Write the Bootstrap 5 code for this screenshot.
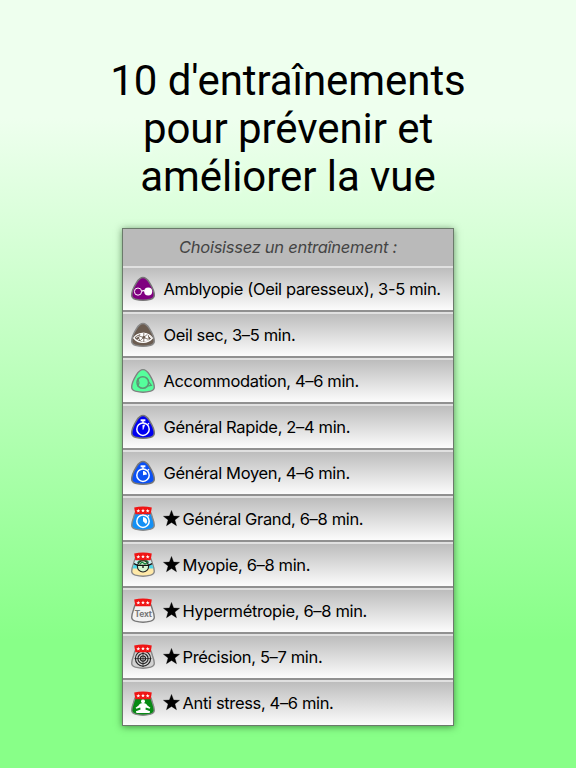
<!DOCTYPE html>
<html lang="fr">

<head>
    <meta charset="UTF-8" />
    <meta name="viewport" content="width=device-width, initial-scale=1" />
    <title>Entraînements pour la vue</title>
    <link href="https://cdn.jsdelivr.net/npm/bootstrap@5.3.2/dist/css/bootstrap.min.css" rel="stylesheet" />
    <style>
        body {
            min-height: 768px;
            background: linear-gradient(#eeffee 0, #eeffee 118px, #88ff88 640px, #88ff88 100%);
            font-family: Inter, "Liberation Sans", sans-serif;
            color: #000;
        }

        .page-title {
            padding-top: 57px;
            margin-bottom: 27px;
            font: 400 42px/48px Roboto, "Liberation Sans", sans-serif;
            letter-spacing: -.06px;
            text-shadow: 2px 2px 3px rgba(255, 255, 255, .3);
        }

        .training-panel {
            --bs-card-inner-border-radius: 0;
            width: 332px;
            border: 1px solid #6b7a6b;
            border-radius: 0;
            box-shadow: 0 1px 7px rgba(0, 40, 0, .5);
            background: #bababa;
        }

        .panel-title {
            height: 37px;
            font-size: 16.5px;
            letter-spacing: -.27px;
            color: #444;
        }

        .training-list .training {
            height: 46px;
            padding: 0 0 0 7px;
            border: 0;
            border-top: 2px solid #e0e0e0;
            border-bottom: 2px solid #909090;
            background: linear-gradient(#bdbdbd, #fcfcfc) padding-box;
            font-size: 16.5px;
            letter-spacing: -.35px;
            color: #000;
            white-space: nowrap;
        }

        .training-list .training:last-child {
            height: 45px;
            border-bottom-width: 0;
        }

        .training-icon {
            width: 26px;
            height: 26px;
            margin-right: 7.5px;
        }

        .star-icon {
            width: 17px;
            height: 17px;
            margin: 0 3px 2px -1px;
            stroke: #000;
            stroke-width: .04;
        }
    </style>
</head>

<body>
    <svg class="d-none">
        <defs>
            <path id="shape" d="M13 1.6C10.6 1.6 8.6 3.3 6.4 6.8C4 10.6 1.7 15.8 1.7 19.2C1.7 21.7 3.3 22.5 5.4 23.2C10.4 24.6 15.6 24.6 20.6 23.2C22.7 22.5 24.3 21.7 24.3 19.2C24.3 15.8 22 10.6 19.6 6.8C17.4 3.3 15.4 1.6 13 1.6Z" />
            <path id="pot" d="M5 7H21L22.6 12C23.7 15 24.3 17.3 24.3 19.2C24.3 21.7 22.7 22.5 20.6 23.2C15.6 24.6 10.4 24.6 5.4 23.2C3.3 22.5 1.7 21.7 1.7 19.2C1.7 17.3 2.3 15 3.4 12Z" />
            <path id="star" d="M0 -.95L.25 -.29L.95 -.26L.4 .17L.59 .85L0 .46L-.59 .85L-.4 .17L-.95 -.26L-.25 -.29Z" />
            <g id="crown">
                <path d="M4.2 1.6C10 .2 16 .2 21.8 1.6L20.6 8.2H5.4Z" fill="#f01414" />
                <g fill="#fff">
                    <use href="#star" transform="translate(8.3 4.8) scale(2.1)" />
                    <use href="#star" transform="translate(13 4.5) scale(2.1)" />
                    <use href="#star" transform="translate(17.7 4.8) scale(2.1)" />
                </g>
            </g>
            <g id="watch" fill="none" stroke="#fff">
                <circle cx="13" cy="15.2" r="6.2" stroke-width="1.5" />
                <path d="M10.6 6.3H15.4" stroke-width="2" />
                <path d="M13 6.5V9M18 9.2L19 10.2" stroke-width="1.4" />
            </g>
        </defs>
    </svg>

    <h1 class="page-title text-center">10 d'entraînements<br>pour prévenir et<br>améliorer la vue</h1>

    <div class="card training-panel mx-auto">
        <div class="panel-title d-flex align-items-center justify-content-center fst-italic">Choisissez un entraînement :</div>
        <div class="list-group list-group-flush training-list border-0 rounded-0">
            <div class="list-group-item training d-flex align-items-center">
                <svg class="training-icon" viewBox="0 0 26 26">
                    <use href="#shape" fill="#800080" stroke="#777" stroke-width="1.5" />
                    <circle cx="8" cy="15.6" r="3.6" fill="none" stroke="#fff" stroke-width="1" />
                    <path d="M11.6 15.2Q13.4 14 15 15" fill="none" stroke="#fff" stroke-width="1.2" />
                    <circle cx="18.2" cy="15.6" r="4" fill="#fff" />
                </svg>
                <span>Amblyopie (Oeil paresseux), 3-5 min.</span>
            </div>
            <div class="list-group-item training d-flex align-items-center">
                <svg class="training-icon" viewBox="0 0 26 26">
                    <use href="#shape" fill="#6b5c50" stroke="#888" stroke-width="1.5" />
                    <path d="M3.8 16C7 10.3 17.5 9.2 22.3 16C18 21.5 8.5 22 3.8 16Z" fill="none" stroke="#fff" stroke-width="1.3" />
                    <circle cx="13.8" cy="15.3" r="4.5" fill="#fff" />
                    <path d="M13.8 11V20M9.5 14L18 17.2M10.8 18L17.3 12.4" stroke="#6b5c50" stroke-width=".8" />
                    <circle cx="13.8" cy="15.3" r="1.4" fill="#6b5c50" />
                    <path d="M6 15.5L9 14M7.5 18L9.8 16.7M19 14L21 16M17.5 19L18.6 16.5" stroke="#fff" stroke-width=".9" />
                </svg>
                <span>Oeil sec, 3–5 min.</span>
            </div>
            <div class="list-group-item training d-flex align-items-center">
                <svg class="training-icon" viewBox="0 0 26 26">
                    <use href="#shape" fill="#55ff9c" stroke="#808080" stroke-width="1.4" />
                    <circle cx="12.8" cy="14.5" r="5.8" fill="none" stroke="#5f9576" stroke-width="1.6" />
                    <path d="M7.4 10.6Q10.4 14.5 7.4 18.4M17.2 18.2L21.4 17.4L18.8 14.2" fill="none" stroke="#5f9576" stroke-width="1.2" />
                </svg>
                <span>Accommodation, 4–6 min.</span>
            </div>
            <div class="list-group-item training d-flex align-items-center">
                <svg class="training-icon" viewBox="0 0 26 26">
                    <use href="#shape" fill="#0000f0" stroke="#777" stroke-width="1.5" />
                    <use href="#watch" />
                    <path d="M13 15.5L12.8 11.2L14.8 10.8Z" fill="#fff" stroke="#fff" stroke-width=".6" />
                </svg>
                <span>Général Rapide, 2–4 min.</span>
            </div>
            <div class="list-group-item training d-flex align-items-center">
                <svg class="training-icon" viewBox="0 0 26 26">
                    <use href="#shape" fill="#0a50f5" stroke="#777" stroke-width="1.5" />
                    <use href="#watch" />
                    <path d="M13 15.2V11A4.2 4.2 0 0 1 17 14.5Z" fill="#fff" />
                </svg>
                <span>Général Moyen, 4–6 min.</span>
            </div>
            <div class="list-group-item training d-flex align-items-center">
                <svg class="training-icon" viewBox="0 0 26 26">
                    <use href="#pot" fill="#1490f5" stroke="#888" stroke-width="1.4" />
                    <use href="#watch" />
                    <path d="M13 15.2V11A4.2 4.2 0 0 1 16 18.1Z" fill="#fff" />
                    <use href="#crown" />
                </svg>
                <svg class="star-icon" viewBox="-1 -1 2 2"><use href="#star" /></svg>
                <span>Général Grand, 6–8 min.</span>
            </div>
            <div class="list-group-item training d-flex align-items-center">
                <svg class="training-icon" viewBox="0 0 26 26">
                    <use href="#pot" fill="#ffe9a8" stroke="#888" stroke-width="1.4" />
                    <path d="M5.4 8H20.6L22.3 13H3.7Z" fill="#c9eef5" />
                    <path d="M3.6 13H22.4L23.4 16.5H2.6Z" fill="#50d5e8" />
                    <path d="M7 11Q9 7 13.5 8Q18 7 19 11L15 10L12 11Z" fill="#16803c" />
                    <circle cx="13" cy="14.4" r="5.6" fill="#d7f5d0" stroke="#222" stroke-width="1.1" />
                    <path d="M3.8 11.6L7.6 13.4H18.4L22.2 11.6M13 13.6V16" fill="none" stroke="#111" stroke-width="1.3" />
                    <path d="M9.5 12.5L12 10L15 12L17 11" fill="none" stroke="#16803c" stroke-width="1.3" />
                    <use href="#crown" />
                </svg>
                <svg class="star-icon" viewBox="-1 -1 2 2"><use href="#star" /></svg>
                <span>Myopie, 6–8 min.</span>
            </div>
            <div class="list-group-item training d-flex align-items-center">
                <svg class="training-icon" viewBox="0 0 26 26">
                    <use href="#pot" fill="#f2f2f2" stroke="#777" stroke-width="1.4" />
                    <text x="13" y="19" text-anchor="middle" textLength="17" font-size="8.5" font-weight="700" fill="#777">Text</text>
                    <use href="#crown" />
                </svg>
                <svg class="star-icon" viewBox="-1 -1 2 2"><use href="#star" /></svg>
                <span>Hypermétropie, 6–8 min.</span>
            </div>
            <div class="list-group-item training d-flex align-items-center">
                <svg class="training-icon" viewBox="0 0 26 26">
                    <use href="#pot" fill="#d2d2d2" stroke="#888" stroke-width="1.4" />
                    <g fill="none" stroke="#222" stroke-width="1.1">
                        <circle cx="13" cy="14.6" r="7.6" />
                        <circle cx="13" cy="14.6" r="5.1" />
                        <circle cx="13" cy="14.6" r="2.6" />
                        <path d="M4.6 14.6H21.4M13 7V23" stroke-width=".8" />
                    </g>
                    <use href="#crown" />
                </svg>
                <svg class="star-icon" viewBox="-1 -1 2 2"><use href="#star" /></svg>
                <span>Précision, 5–7 min.</span>
            </div>
            <div class="list-group-item training d-flex align-items-center">
                <svg class="training-icon" viewBox="0 0 26 26">
                    <use href="#pot" fill="#078a14" stroke="#888" stroke-width="1.4" />
                    <circle cx="13" cy="10.3" r="2" fill="#fff" />
                    <path d="M13 12C15.5 12.2 16.6 12.8 17.4 14.5L20.4 16.8L19.6 17.8L15.8 16.4L15.4 18.6L20 20.2Q20.7 21.7 18.8 21.9H7.2Q5.3 21.7 6 20.2L10.6 18.6L10.2 16.4L6.4 17.8L5.6 16.8L8.6 14.5C9.4 12.8 10.5 12.2 13 12Z" fill="#fff" />
                    <use href="#crown" />
                </svg>
                <svg class="star-icon" viewBox="-1 -1 2 2"><use href="#star" /></svg>
                <span>Anti stress, 4–6 min.</span>
            </div>
        </div>
    </div>

    <script src="https://cdn.jsdelivr.net/npm/bootstrap@5.3.2/dist/js/bootstrap.bundle.min.js"></script>
</body>

</html>
